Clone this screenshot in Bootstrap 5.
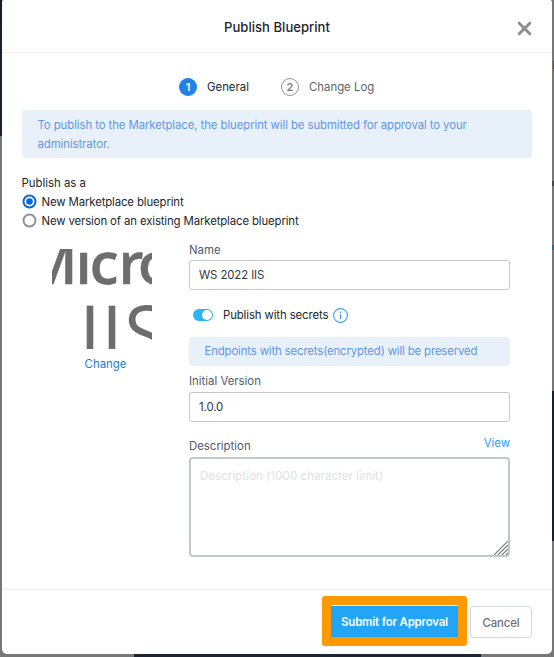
<!DOCTYPE html>
<html lang="en">
<head>
<meta charset="utf-8">
<meta name="viewport" content="width=device-width, initial-scale=1">
<title>Publish Blueprint</title>
<link href="https://cdn.jsdelivr.net/npm/bootstrap@5.3.0/dist/css/bootstrap.min.css" rel="stylesheet">
<style>
  body { font: 400 11.4px/19px Inter, "Liberation Sans", sans-serif; color: #22272e; width: 554px; height: 657px; overflow: hidden;
    background:
      linear-gradient(#1c2531, #1c2531) 134px 654px / 347px 3px no-repeat,
      linear-gradient(#151f2b, #1c2430) 0 0 / 2px 136px no-repeat,
      linear-gradient(#17212b, #17212b) 552px 391px / 2px 150px no-repeat,
      linear-gradient(#6b4a35, #6b4a35) 553px 61px / 1px 8px no-repeat,
      linear-gradient(#3f4a5c, #3f4a5c) 552px 181px / 2px 5px no-repeat,
      linear-gradient(#3c6585, #3c6585) 552px 245px / 2px 5px no-repeat,
      #777; }
  .dialog-box { width: 550px; height: 654px; margin-left: 2px; border-radius: 2px 2px 5px 5px; }
  .dialog-head { height: 53px; border-bottom: 1px solid #f0f1f2; }
  .dialog-head h1 { font-size: 13.1px; line-height: 20px; margin: 17px 0 0; font-weight: 450; }
  .close-x { right: 20px; top: 21px; width: 15px; height: 15px; line-height: 0; }
  .dialog-main { height: 536px; padding: 25px 20px 0; }
  .steps { height: 18px; margin-bottom: 14px; padding-left: 157px; }
  .step-dot { width: 18px; height: 18px; margin-right: 10px; font-size: 11px; font-weight: 600; border: 1px solid #8f969d; color: #7b8187; }
  .step-dot.current { background: #2081e8; border-color: #2081e8; color: #fff; }
  .step-two { margin-left: 32px; color: #5d6268; }
  .note { background: #e8f0fa; color: #6496e3; border-radius: 4px; }
  .note-main { height: 48px; padding: 6px 15.5px 0; line-height: 19px; letter-spacing: -.09px; }
  .note-small { width: 321px; height: 29px; padding: 5px 15.5px; letter-spacing: -.15px; white-space: nowrap; }
  .choice-title { margin-top: 16px; line-height: 18px; margin-left: -.5px; }
  .choice { height: 19px; line-height: 18px; margin-left: -.5px; letter-spacing: -.13px; }
  .choice svg { margin-right: 5px; }
  .columns { padding-top: 11px; }
  .logo-col { width: 167px; padding: 8px 0 0 30px; }
  .logo-art { display: block; overflow: hidden; }
  .change { width: 107px; margin-top: 6px; color: #1b80d9; }
  .fields { width: 321px; }
  .fields label { display: block; color: #525b6b; }
  .field-box { height: 30px; border: 1px solid #c3c7cb; border-radius: 3px; font-size: 11.4px; padding: 0 9px; color: #32363b; box-shadow: none; letter-spacing: -.1px; }
  .toggle-row { height: 20px; margin: 15px 0 12px; padding-left: 4px; letter-spacing: -.12px; }
  .toggle-row span { margin: 0 5px 0 10px; }
  .fields .version-label { padding: 6px 0 1px; }
  .desc-row { height: 28px; margin-top: 7px; }
  .desc-row label { padding-top: 8px; }
  .view-link { padding-top: 5px; color: #22a5f7; }
  .desc-box { height: 100px; border: 2px solid #c3c8cc; border-radius: 4px; font-size: 11.4px; padding: 9px 9px; resize: none; box-shadow: none; display: block; letter-spacing: .12px; }
  .desc-box::placeholder { color: #e0e1e3; opacity: 1; }
  .grip { right: 2px; bottom: 2px; }
  .dialog-foot { height: 65px; border-top: 1px solid #f0f1f2; padding: 6px 20px 0 0; }
  .highlight { width: 145px; height: 50px; background: #ff9900; border-radius: 3px; padding: 9px; margin-right: 3px; }
  .submit-btn, .cancel-btn { font-size: 11.4px; font-weight: 600; padding: 3px 0 0; border-radius: 0; white-space: nowrap; letter-spacing: -.15px; }
  .submit-btn, .submit-btn:hover { width: 127px; height: 32px; background: #22a5f7; color: #fff; border: 0; border-top: 1px solid #fff3df; }
  .cancel-btn { width: 62px; height: 32px; margin-top: 10px; border: 1px solid #d0d6dc; border-radius: 4px; color: #6b7178; background: #fff; font-weight: 500; }
</style>
<script src="https://cdn.jsdelivr.net/npm/bootstrap@5.3.0/dist/js/bootstrap.bundle.min.js"></script>
</head>
<body>
<main class="dialog-box bg-white overflow-hidden">
  <header class="dialog-head position-relative d-flex justify-content-center align-items-start">
    <h1>Publish Blueprint</h1>
    <button class="close-x btn p-0 border-0 position-absolute" type="button" aria-label="Close">
      <svg width="15" height="15" viewBox="0 0 15 15"><path d="M2.2 2.2 12.8 12.8M12.8 2.2 2.2 12.8" stroke="#8f8f8f" stroke-width="3" stroke-linecap="round"/></svg>
    </button>
  </header>
  <section class="dialog-main">
    <div class="steps d-flex align-items-center">
      <span class="step-dot current rounded-circle d-flex align-items-center justify-content-center">1</span><span>General</span>
      <span class="step-two d-flex align-items-center"><span class="step-dot rounded-circle d-flex align-items-center justify-content-center">2</span><span>Change Log</span></span>
    </div>
    <div class="note note-main">To publish to the Marketplace, the blueprint will be submitted for approval to your<br>administrator.</div>
    <div class="choice-title">Publish as a</div>
    <div class="choice d-flex align-items-center">
      <svg width="15" height="15" viewBox="0 0 15 15"><circle cx="7.5" cy="7.5" r="6" fill="#fff" stroke="#0a66dc" stroke-width="2"/><circle cx="7.5" cy="7.5" r="3.3" fill="#0a66dc"/></svg><span>New Marketplace blueprint</span>
    </div>
    <div class="choice d-flex align-items-center">
      <svg width="15" height="15" viewBox="0 0 15 15"><circle cx="7.5" cy="7.5" r="6" fill="#fff" stroke="#8f8f9d" stroke-width="1.9"/></svg><span>New version of an existing Marketplace blueprint</span>
    </div>
    <div class="columns d-flex">
      <div class="logo-col">
        <svg class="logo-art" width="100" height="100" viewBox="0 0 100 100" fill="#6d6d6d">
          <text x="-28 23.4 37.7 66.4 86" y="35" font-family="Open Sans, sans-serif" font-size="58" font-weight="600" stroke="#6d6d6d" stroke-width=".5">Micro</text>
          <text x="27 49 72" y="113" font-family="Open Sans, sans-serif" font-size="79" font-weight="400">IIS</text>
        </svg>
        <div class="change text-center">Change</div>
      </div>
      <div class="fields">
        <label for="bpName">Name</label>
        <input id="bpName" class="form-control field-box" type="text" value="WS 2022 IIS">
        <div class="toggle-row d-flex align-items-center">
          <svg width="20" height="12" viewBox="0 0 20 12"><rect width="20" height="12" rx="6" fill="#2cb5ef"/><circle cx="14" cy="6" r="5" fill="#fff"/></svg>
          <span>Publish with secrets</span>
          <svg width="15" height="15" viewBox="0 0 15 15"><circle cx="7.5" cy="7.5" r="6.9" fill="#fff" stroke="#3d9fe8" stroke-width="1.1"/><path d="M7.5 6.3V11" stroke="#3d91e0" stroke-width="1.2"/><circle cx="7.5" cy="4.3" r=".8" fill="#3d91e0"/></svg>
        </div>
        <div class="note note-small">Endpoints with secrets(encrypted) will be preserved</div>
        <label class="version-label" for="bpVersion">Initial Version</label>
        <input id="bpVersion" class="form-control field-box" type="text" value="1.0.0">
        <div class="desc-row d-flex justify-content-between"><label for="bpDesc">Description</label><span class="view-link">View</span></div>
        <div class="position-relative">
          <textarea id="bpDesc" class="form-control desc-box" placeholder="Description (1000 character limit)"></textarea>
          <svg class="grip position-absolute" width="14" height="14" viewBox="0 0 14 14"><path d="M0 14 14 0M4 14 14 4M8 14l6-6M12 14l2-2" stroke="#777" stroke-width="1.1"/></svg>
        </div>
      </div>
    </div>
  </section>
  <footer class="dialog-foot d-flex justify-content-end align-items-start">
    <div class="highlight"><button class="btn submit-btn" type="button">Submit for Approval</button></div>
    <button class="btn cancel-btn" type="button">Cancel</button>
  </footer>
</main>
</body>
</html>
